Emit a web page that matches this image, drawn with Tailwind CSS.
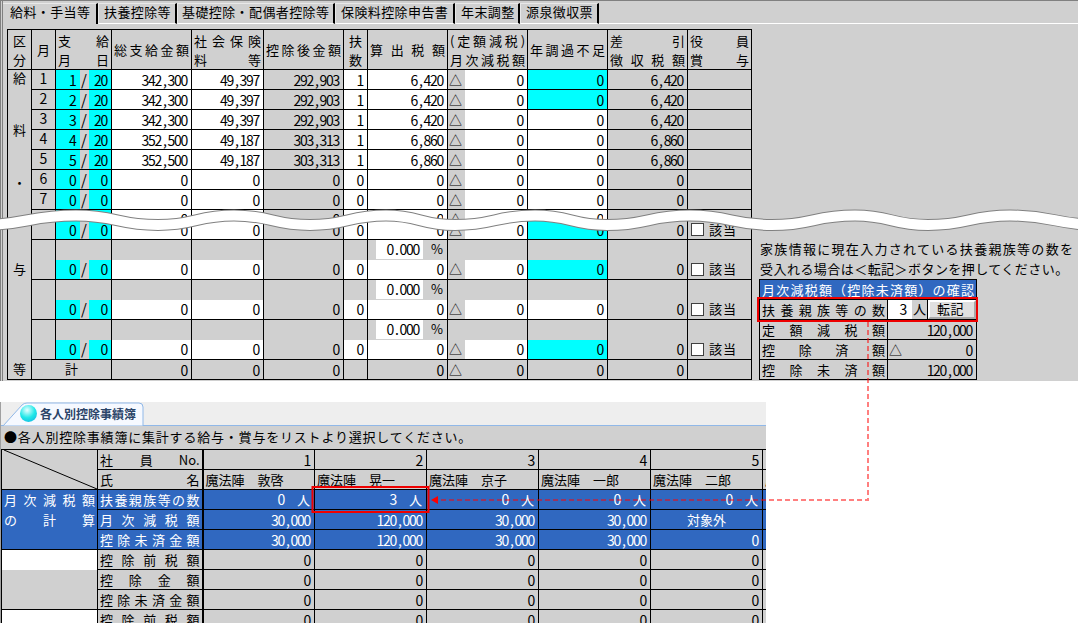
<!DOCTYPE html>
<html lang="ja">
<head>
    <meta charset="UTF-8" />
    <title>各人別控除事績簿</title>
    <script src="https://cdn.jsdelivr.net/npm/@tailwindcss/browser@4"></script>
</head>
<body class="bg-white">
<div class="relative w-[1078px] h-[623px] overflow-hidden bg-white text-black text-[13px] leading-[18px] font-['Noto_Sans_CJK_JP',sans-serif]">

    <!-- 給与入力パネル -->
    <section class="h-[381px] bg-[#d0d0d0] border-t border-t-[#808080] border-l-[3px] border-double border-l-[#808080]">
        <nav class="flex mt-[2px] tracking-[0.4px]">
            <div class="w-[95px] h-[21px] pl-[7px] leading-[15px] border-r-2 border-r-black border-t border-t-[#e8e8e8]">給料・手当等</div>
            <div class="w-[79px] h-[21px] pl-[5px] leading-[15px] border-r-2 border-r-black border-t border-t-[#e8e8e8] border-b border-b-white border-l border-l-[#e8e8e8]">扶養控除等</div>
            <div class="w-[158px] h-[21px] pl-[4px] leading-[15px] border-r-2 border-r-black border-t border-t-[#e8e8e8] border-b border-b-white border-l border-l-[#e8e8e8]">基礎控除・配偶者控除等</div>
            <div class="w-[120px] h-[21px] pl-[5px] leading-[15px] border-r-2 border-r-black border-t border-t-[#e8e8e8] border-b border-b-white border-l border-l-[#e8e8e8]">保険料控除申告書</div>
            <div class="w-[65px] h-[21px] pl-[5px] leading-[15px] border-r-2 border-r-black border-t border-t-[#e8e8e8] border-b border-b-white border-l border-l-[#e8e8e8]">年末調整</div>
            <div class="w-[79px] h-[21px] pl-[5px] leading-[15px] border-r-2 border-r-black border-t border-t-[#e8e8e8] border-b border-b-white border-l border-l-[#e8e8e8]">源泉徴収票</div>
            <div class="flex-1 h-[21px] border-b border-b-white"></div>
        </nav>

        <div class="flex items-start mt-[5px] ml-[4px]">
            <table id="payTable" class="table-fixed border-collapse w-[745px] shrink-0">
                <colgroup>
                    <col class="w-[24px]" /><col class="w-[24px]" /><col class="w-[24px]" /><col class="w-[9px]" /><col class="w-[23px]" />
                    <col class="w-[80px]" /><col class="w-[72px]" /><col class="w-[80px]" /><col class="w-[24px]" /><col class="w-[80px]" />
                    <col class="w-[17px]" /><col class="w-[63px]" /><col class="w-[80px]" /><col class="w-[80px]" /><col class="w-[64px]" />
                </colgroup>
                <thead id="payHead"></thead>
                <tbody id="payBody"></tbody>
            </table>

            <div class="ml-[7px] mt-[210px] w-[318px] shrink-0">
                <p class="h-[20px] leading-[20px] pl-[1px] whitespace-nowrap tracking-[1.3px]">家族情報に現在入力されている扶養親族等の数を</p>
                <p class="h-[20px] leading-[20px] pl-[1px] whitespace-nowrap tracking-[0.45px]">受入れる場合は＜転記＞ボタンを押してください。</p>
                <table class="table-fixed border-collapse w-[217px]">
                    <colgroup><col class="w-[128px]" /><col class="w-[89px]" /></colgroup>
                    <tr>
                        <td colspan="2" class="h-[20px] p-0 px-[2px] border border-black bg-[#3068c0] text-white whitespace-nowrap [text-align-last:justify]">月次減税額（控除未済額）の確認</td>
                    </tr>
                    <tr>
                        <td class="h-[20px] p-0 px-[2px] border border-black [text-align-last:justify]">扶養親族等の数</td>
                        <td class="h-[20px] p-0 border border-black">
                            <div class="flex h-[19px]">
                                <div class="w-[24px] bg-white text-right pr-[6px] text-[14px] tracking-[-1.3px]">3</div>
                                <div class="w-[16px] text-center border-r border-r-black">人</div>
                                <div class="w-[48px] pl-[7px] tracking-[0.5px] bg-[#e0e0e0] border-2 border-t-white border-l-white border-b-[#a8a8a8] border-r-[#a8a8a8] leading-[14px]">転記</div>
                            </div>
                        </td>
                    </tr>
                    <tr>
                        <td class="h-[20px] p-0 px-[2px] border border-black [text-align-last:justify]">定額減税額</td>
                        <td class="h-[20px] p-0 pr-[4px] border border-black text-right text-[14px] tracking-[-1.3px]">120<span class="px-[2px]">,</span>000</td>
                    </tr>
                    <tr>
                        <td class="h-[20px] p-0 px-[2px] border border-black [text-align-last:justify]">控除済額</td>
                        <td class="h-[20px] p-0 pr-[4px] border border-black">
                            <div class="flex justify-between pl-[1px]"><span>△</span><span class="text-[14px] tracking-[-1.3px]">0</span></div>
                        </td>
                    </tr>
                    <tr>
                        <td class="h-[20px] p-0 px-[2px] border border-black [text-align-last:justify]">控除未済額</td>
                        <td class="h-[20px] p-0 pr-[4px] border border-black text-right text-[14px] tracking-[-1.3px]">120<span class="px-[2px]">,</span>000</td>
                    </tr>
                </table>
            </div>
        </div>
    </section>

    <!-- 各人別控除事績簿 -->
    <section class="mt-[21px] w-[766px] h-[221px] flex flex-col bg-[#d0d0d0] border-l border-l-[#a0a0a0]">
        <div class="relative h-[24px] shrink-0 bg-[#eeeeee] border-b border-b-[#90b8e8]">
            <svg class="absolute left-0 top-0" width="150" height="24">
                <path d="M2 24 L21 3 Q23 1 26 1 L138 1 Q142 1 142 5 L142 24 Z" fill="#f6f9ff" stroke="#90b8e8" />
            </svg>
            <div class="relative flex items-center h-[23px] pl-[19px] gap-[3px]">
                <div class="w-[17px] h-[17px] rounded-full bg-[radial-gradient(circle_at_42%_30%,#e8ffff,#20e8e8_50%,#10a8e0)]"></div>
                <span class="text-[12px] font-bold text-[#2a4468]">各人別控除事績簿</span>
            </div>
        </div>
        <p class="h-[23px] shrink-0 leading-[22px] pl-[3px] tracking-[0.8px] whitespace-nowrap">●各人別控除事績簿に集計する給与・賞与をリストより選択してください。</p>
        <div class="flex-1 overflow-hidden">
            <table class="table-fixed border-collapse w-[873px]">
                <colgroup>
                    <col class="w-[96px]" /><col class="w-[105px]" />
                    <col class="w-[112px]" /><col class="w-[112px]" /><col class="w-[112px]" /><col class="w-[112px]" /><col class="w-[112px]" /><col class="w-[112px]" />
                </colgroup>
                <tbody id="ledgerBody"></tbody>
            </table>
        </div>
    </section>

    <!-- 波線(省略部分) -->
    <svg class="absolute left-0 top-0 pointer-events-none" width="1078" height="623" fill="none">
        <path stroke="#808080" stroke-width="12" d="M-20 225 C28 225 28 215.5 76 215.5 C117 215.5 117 225 158 225 C196 225 196 215.5 234 215.5 C272 215.5 272 225 310 225 C348 225 348 215.5 386 215.5 C420 215.5 420 225 455 225 C495 225 495 215.5 535 215.5 C571 215.5 571 225 607 225 C648 225 648 215.5 690 215.5 C731 215.5 731 225 772 225 C813 225 813 215.5 855 215.5 C891 215.5 891 225 928 225 C969 225 969 215.5 1010 215.5 C1055 215.5 1055 225 1100 225" />
        <path stroke="#ffffff" stroke-width="10" d="M-20 225 C28 225 28 215.5 76 215.5 C117 215.5 117 225 158 225 C196 225 196 215.5 234 215.5 C272 215.5 272 225 310 225 C348 225 348 215.5 386 215.5 C420 215.5 420 225 455 225 C495 225 495 215.5 535 215.5 C571 215.5 571 225 607 225 C648 225 648 215.5 690 215.5 C731 215.5 731 225 772 225 C813 225 813 215.5 855 215.5 C891 215.5 891 225 928 225 C969 225 969 215.5 1010 215.5 C1055 215.5 1055 225 1100 225" />
        <path stroke="#ff0000" stroke-opacity="0.5" stroke-width="2" stroke-dasharray="5 3" d="M868 322 L868 500 L437 500" />
        <path fill="#ff0000" d="M431 500 L438 496 L438 504 Z" />
        <rect x="758" y="298" width="219" height="23" stroke="#ee0000" stroke-width="2" />
        <rect x="312.5" y="487" width="116" height="25" stroke="#ee0000" stroke-width="2" />
    </svg>
</div>

<script>
    const base = 'h-[20px] p-0 border border-black whitespace-nowrap overflow-hidden';
    const num = 'text-right pr-[4px] text-[14px] tracking-[-1.3px]';
    const spread = 'px-[2px] [text-align-last:justify]';
    const white = 'bg-white', cyan = 'bg-[#00ffff]';

    // カンマは全角の半分の幅で取る
    const fmt = (v) => String(v).replace(',', '<span class="px-[2px]">,</span>');

    const line = (t) => `<div class="${spread} leading-[19px]">${t}</div>`;
    const head = (lines, span = 1) =>
        `<th colspan="${span}" class="h-[40px] p-0 border border-black font-normal">${lines.map(line).join('')}</th>`;

    document.getElementById('payHead').innerHTML = `<tr>
        <th class="h-[40px] w-[24px] p-0 border border-black font-normal leading-[19px]">区<br>分</th>
        <th class="h-[40px] p-0 border border-black font-normal">月</th>
        ${head(['支給', '月日'], 3)}
        ${head(['総支給金額'])}
        ${head(['社会保険', '料等'])}
        ${head(['控除後金額'])}
        <th class="h-[40px] p-0 border border-black font-normal leading-[19px]">扶<br>数</th>
        ${head(['算出税額'])}
        ${head(['(定額減税)', '月次減税額'], 2)}
        ${head(['年調過不足'])}
        ${head(['差引', '徴収税額'])}
        ${head(['役員', '賞与'])}
    </tr>`;

    const sideCell = `<td rowspan="16" class="p-0 border border-black align-top text-center leading-[15px]">
        <div>給</div>
        <div class="mt-[37px]">料</div>
        <div class="mt-[38px]">・</div>
        <div class="mt-[71px]">与</div>
        <div class="mt-[85px]">等</div>
    </td>`;

    function dataRow(r, first) {
        const h = r.partial ? 'h-[10px]' : 'h-[20px]';
        const t = r.bonus ? 'border-t-0' : '';
        const cell = `${h} p-0 border border-black whitespace-nowrap overflow-hidden ${t}`;
        const wrap = (v) => r.partial ? `<div class="h-[9px] overflow-hidden">${v}</div>` : fmt(v);
        const month = r.bonus ? '' : `<td class="${h} p-0 border border-black text-center text-[14px] leading-[15px] ${r.partial ? '' : 'pb-[3px]'}">${r.partial ? '' : r.m}</td>`;
        const role = r.check
            ? `<div class="flex items-center pl-[3px] tracking-[1px]"><span class="w-[13px] h-[13px] bg-white border border-[#404040] mr-[5px]"></span>該当</div>`
            : '';
        return `<tr>${first ? sideCell : ''}${month}
            <td class="${cell} ${num} ${cyan} border-r-0">${wrap(r.mm)}</td>
            <td class="${cell} text-center text-[15px] border-x-0">${wrap('/')}</td>
            <td class="${cell} ${num} ${cyan} border-l-0">${wrap(r.dd)}</td>
            <td class="${cell} ${num} ${white}">${wrap(r.a)}</td>
            <td class="${cell} ${num} ${white}">${wrap(r.b)}</td>
            <td class="${cell} ${num}">${wrap(r.c)}</td>
            <td class="${cell} ${num} ${white}">${wrap(r.d)}</td>
            <td class="${cell} ${num} ${white}">${wrap(r.e)}</td>
            <td class="${cell} border-r-0 pl-[1px]">${wrap('△')}</td>
            <td class="${cell} ${num} ${white} border-l-0">${wrap('0')}</td>
            <td class="${cell} ${num} ${r.hot ? cyan : white}">${wrap('0')}</td>
            <td class="${cell} ${num}">${wrap(r.h)}</td>
            <td class="${cell}">${role}</td>
        </tr>`;
    }

    const bonusTop = `<tr>
        <td rowspan="2" class="p-0 border border-black"></td>
        <td colspan="3" class="h-[20px] p-0 border border-black border-b-0"></td>
        <td class="h-[20px] p-0 border border-black border-b-0"></td>
        <td class="h-[20px] p-0 border border-black border-b-0"></td>
        <td class="h-[20px] p-0 border border-black border-b-0"></td>
        <td class="h-[20px] p-0 border border-black border-b-0"></td>
        <td class="h-[20px] p-0 border border-black border-b-0">
            <div class="flex pl-[8px] h-[19px]"><span class="w-[47px] bg-white text-right pr-[4px] text-[14px] tracking-[-1.3px]">0<span class="px-[2px]">.</span>000</span><span class="flex-1 text-right pr-[4px]">%</span></div>
        </td>
        <td colspan="2" class="h-[20px] p-0 border border-black border-b-0"></td>
        <td class="h-[20px] p-0 border border-black border-b-0"></td>
        <td class="h-[20px] p-0 border border-black border-b-0"></td>
        <td class="h-[20px] p-0 border border-black border-b-0"></td>
    </tr>`;

    const pay = [
        [1, 1, 20, '342,300', '49,397', '292,903', 1, '6,420', true],
        [2, 2, 20, '342,300', '49,397', '292,903', 1, '6,420', true],
        [3, 3, 20, '342,300', '49,397', '292,903', 1, '6,420', false],
        [4, 4, 20, '352,500', '49,187', '303,313', 1, '6,860', false],
        [5, 5, 20, '352,500', '49,187', '303,313', 1, '6,860', false],
        [6, 0, 0, '0', '0', '0', 0, '0', false],
        [7, 0, 0, '0', '0', '0', 0, '0', false],
    ];
    const zero = { mm: 0, dd: 0, a: '0', b: '0', c: '0', d: 0, e: '0', h: '0' };

    let rows = pay.map((p, i) => dataRow({ m: p[0], mm: p[1], dd: p[2], a: p[3], b: p[4], c: p[5], d: p[6], e: p[7], hot: p[8], h: p[7] }, i === 0)).join('');
    rows += dataRow({ ...zero, partial: true });
    rows += dataRow({ ...zero, m: '', hot: true, check: true });
    rows += bonusTop + dataRow({ ...zero, bonus: true, hot: true, check: true });
    rows += bonusTop + dataRow({ ...zero, bonus: true, check: true });
    rows += bonusTop + dataRow({ ...zero, bonus: true, hot: true, check: true });
    rows += `<tr>
        <td colspan="4" class="${base} text-center leading-[15px] pb-[3px]">計</td>
        <td class="${base} ${num}">0</td><td class="${base} ${num}">0</td><td class="${base} ${num}">0</td>
        <td class="${base}"></td>
        <td class="${base} ${num}">0</td>
        <td class="${base} border-r-0 pl-[1px]">△</td>
        <td class="${base} ${num} border-l-0">0</td>
        <td class="${base} ${num}">0</td>
        <td class="${base} ${num}">0</td>
        <td class="${base}"></td>
    </tr>`;
    document.getElementById('payBody').innerHTML = rows;

    // 各人別控除事績簿
    const blue = 'bg-[#3068c0] text-white';
    const names = ['魔法陣　敦啓', '魔法陣　晃一', '魔法陣　京子', '魔法陣　一郎', '魔法陣　二郎', '魔法陣'];
    const nos = [1, 2, 3, 4, 5, ''];
    const people = [0, 3, 0, 0, 0, ''];
    const first = 'border-l-2';
    const label = (t, cls = '') => `<td class="${base} ${spread} ${cls}">${t}</td>`;

    let ledger = `<tr>
        <td rowspan="2" class="p-0 border border-black"><svg class="block" width="95" height="39"><line x1="2" y1="0" x2="95" y2="39" stroke="#000" /></svg></td>
        <td class="${base} px-[2px]"><div class="flex justify-between"><span class="flex-1 [text-align-last:justify] pr-[26px]">社員</span><span>No.</span></div></td>
        ${nos.map((v, i) => `<td class="${base} ${num} ${i === 0 ? first : ''}">${v}</td>`).join('')}
    </tr><tr>
        ${label('氏名')}
        ${names.map((v, i) => `<td class="${base} pl-[2px] ${i === 0 ? first : ''}">${v}</td>`).join('')}
    </tr><tr>
        <td rowspan="3" class="p-0 border border-black align-top ${blue}">
            <div class="h-[20px] leading-[19px] ${spread}">月次減税額</div>
            <div class="h-[20px] leading-[19px] ${spread}">の計算</div>
        </td>
        ${label('扶養親族等の数', blue)}
        ${people.map((v, i) => `<td class="${base} ${blue} text-right pr-[4px] ${i === 0 ? first : ''}"><span class="text-[14px] tracking-[-1.3px]">${v}</span>${v === '' ? '' : '<span class="ml-[13px]">人</span>'}</td>`).join('')}
    </tr><tr>
        ${label('月次減税額', blue)}
        ${['30,000', '120,000', '30,000', '30,000'].map((v, i) => `<td class="${base} ${blue} ${num} ${i === 0 ? first : ''}">${fmt(v)}</td>`).join('')}
        <td class="${base} ${blue} text-center">対象外</td><td class="${base} ${blue}"></td>
    </tr><tr>
        ${label('控除未済金額', blue)}
        ${['30,000', '120,000', '30,000', '30,000', '0', ''].map((v, i) => `<td class="${base} ${blue} ${num} ${i === 0 ? first : ''}">${fmt(v)}</td>`).join('')}
    </tr>`;

    ['控除前税額', '控除金額', '控除未済金額', '控除前税額'].forEach((t, r) => {
        const side = r === 0
            ? `<td rowspan="3" class="p-0 border border-black align-top"><div class="h-[20px] bg-white"></div></td>`
            : r === 3 ? `<td class="${base} bg-white"></td>` : '';
        ledger += `<tr>${side}${label(t)}${[0, 0, 0, 0, 0, ''].map((v, i) => `<td class="${base} ${num} ${i === 0 ? first : ''}">${v}</td>`).join('')}</tr>`;
    });
    document.getElementById('ledgerBody').innerHTML = ledger;
</script>
</body>
</html>
